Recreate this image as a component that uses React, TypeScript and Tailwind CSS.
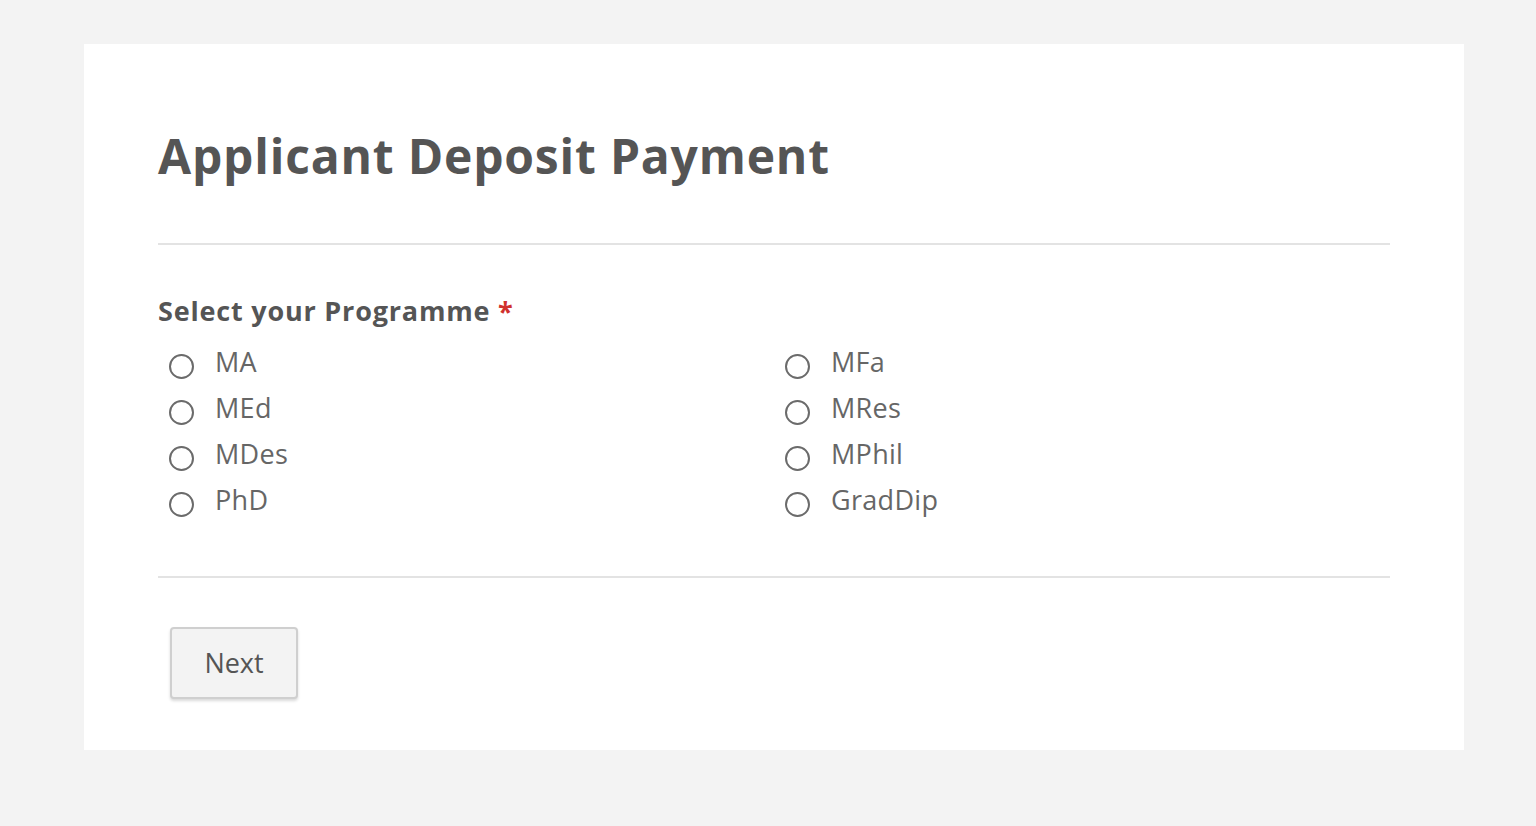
import React from "react";

const left = ["MA", "MEd", "MDes", "PhD"];
const right = ["MFa", "MRes", "MPhil", "GradDip"];

function Option({ label }: { label: string }) {
  return (
    <label className="flex h-[46px] items-center">
      <span className="ml-[11px] mt-[6px] box-border h-[25px] w-[25px] rounded-full border-[2px] border-[#6b6b6b] bg-white" />
      <span className="ml-[21px] pb-[3px] text-[27px] leading-none tracking-[0.3px] text-[#666]">{label}</span>
    </label>
  );
}

export default function App() {
  return (
    <div
      className="min-h-[826px] bg-[#f3f3f3] pt-[44px] pl-[84px]"
      style={{ fontFamily: '"Open Sans", "Noto Sans", "DejaVu Sans", sans-serif' }}
    >
      <div className="h-[706px] w-[1380px] bg-white px-[74px] pt-[82px]">
        <h1 className="text-[48px] font-bold leading-[60px] tracking-[0.8px] text-[#555]">
          Applicant Deposit Payment
        </h1>
        <div className="mt-[57px] h-[2px] bg-[#e3e3e3]" />
        <div className="mt-[48px] text-[27px] font-bold leading-[36px] tracking-[0.8px] text-[#555]">
          Select your Programme <span className="text-[#d0312d]">*</span>
        </div>
        <div className="mt-[11px] grid grid-cols-[616px_1fr]">
          <div className="flex flex-col">
            {left.map((l) => (
              <Option key={l} label={l} />
            ))}
          </div>
          <div className="flex flex-col">
            {right.map((l) => (
              <Option key={l} label={l} />
            ))}
          </div>
        </div>
        <div className="mt-[52px] h-[2px] bg-[#e3e3e3]" />
        <button className="ml-[12px] mt-[49px] h-[72px] w-[128px] rounded-[4px] border-[2px] border-[#cfcfcf] bg-[#f3f3f3] text-[27px] text-[#555] shadow-[0_2px_3px_rgba(0,0,0,0.15)]">
          Next
        </button>
      </div>
    </div>
  );
}
